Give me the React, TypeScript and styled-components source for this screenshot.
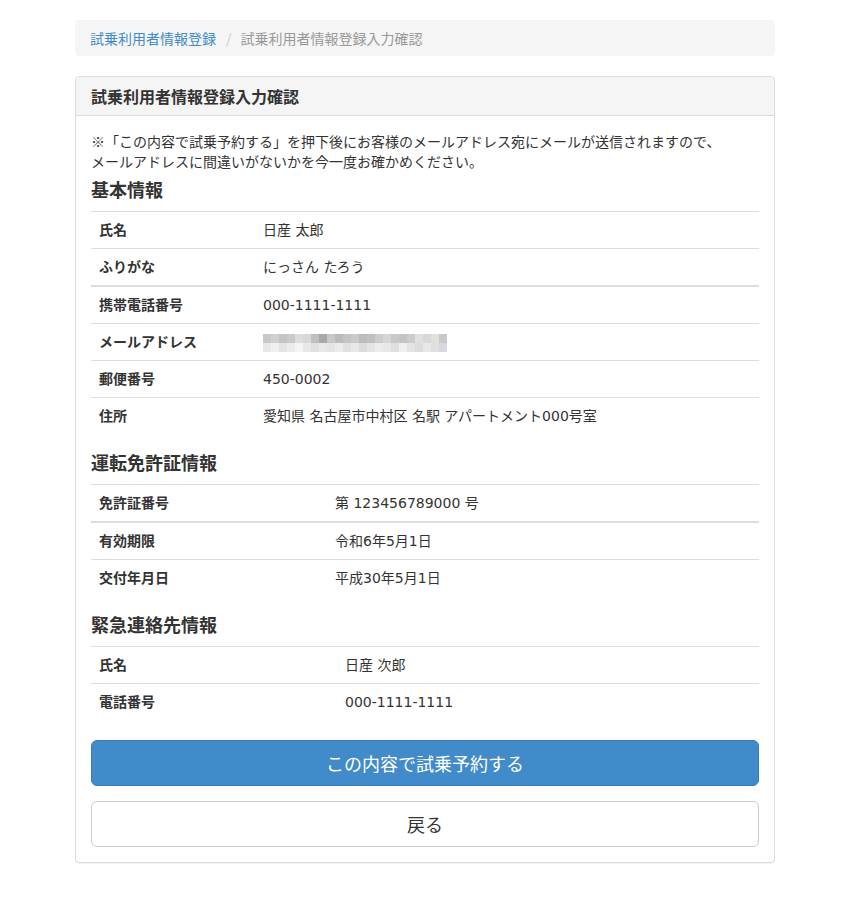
import React from "react";
import styled, { createGlobalStyle } from "styled-components";

const Global = createGlobalStyle`
  html, body { margin: 0; padding: 0; background: #fff; }
  body {
    font-family: "DejaVu Sans", "Noto Sans CJK JP", sans-serif;
    font-size: 14px;
    line-height: 20px;
    color: #333;
  }
  * { box-sizing: border-box; }
`;

const Container = styled.div`
  width: 700px;
  margin: 20px auto 0;
`;

const Breadcrumb = styled.ol`
  list-style: none;
  margin: 0 0 20px;
  padding: 8px 15px;
  background: #f5f5f5;
  border-radius: 4px;
  display: flex;
  font-family: "Noto Sans CJK JP", sans-serif;
`;

const Crumb = styled.li<{ $active?: boolean }>`
  color: ${(p) => (p.$active ? "#999" : "#428bca")};
  &:not(:first-child)::before {
    content: "/";
    color: #ccc;
    padding: 0 9px 0 10px;
  }
`;

const Panel = styled.section`
  border: 1px solid #ddd;
  border-radius: 4px;
  background: #fff;
  box-shadow: 0 1px 1px rgba(0, 0, 0, 0.05);
  margin-bottom: 40px;
`;

const PanelHeading = styled.div`
  background: #f5f5f5;
  border-bottom: 1px solid #ddd;
  border-radius: 3px 3px 0 0;
  padding: 10px 15px;
`;

const PanelTitle = styled.h3`
  margin: 0;
  font-family: "Noto Sans CJK JP", sans-serif;
  font-size: 16px;
  font-weight: 700;
  line-height: 18px;
  color: #333;
`;

const PanelBody = styled.div`
  padding: 15px;
`;

const Note = styled.p`
  margin: 0 0 10px;
  font-family: "Noto Sans CJK JP", sans-serif;
  font-size: 14px;
  line-height: 20px;
`;

const SectionTitle = styled.h4`
  margin: 10px 0 14px;
  font-family: "Noto Sans CJK JP", sans-serif;
  font-size: 18px;
  font-weight: 700;
  line-height: 16px;
  color: #333;
`;

const Table = styled.table`
  width: 100%;
  border-collapse: collapse;
  border-spacing: 0;
  margin-bottom: 20px;
  & > tbody + tbody {
    border-top: 2px solid #ddd;
  }
`;

const Label = styled.th<{ $w: number }>`
  width: ${(p) => p.$w}px;
  text-align: left;
  font-weight: 700;
  padding: 8px;
  line-height: 20px;
  border-top: 1px solid #ddd;
  vertical-align: top;
  font-family: "DejaVu Sans", "Noto Sans CJK JP", sans-serif;
  font-size: 14px;
`;

const Value = styled.td`
  padding: 8px;
  line-height: 20px;
  border-top: 1px solid #ddd;
  vertical-align: top;
`;

const Mosaic = styled.div`
  display: grid;
  grid-template-columns: repeat(23, 8px);
  grid-template-rows: 9px 9px;
  margin-top: 2px;
`;

const Tile = styled.span`
  display: block;
`;

const PrimaryButton = styled.button`
  display: block;
  width: 100%;
  padding: 10px 16px;
  font-family: "Noto Sans CJK JP", sans-serif;
  font-size: 18px;
  line-height: 24px;
  color: #fff;
  background: #428bca;
  border: 1px solid #357ebd;
  border-radius: 6px;
  cursor: pointer;
  margin: 0 0 15px;
`;

const DefaultButton = styled(PrimaryButton)`
  color: #333;
  background: #fff;
  border-color: #ccc;
  margin: 0;
`;

const row1 = [
  "#c8c8c8", "#d0d0d0", "#c4c4c4", "#cacaca", "#dcdcdc", "#d8d8d8", "#c0c0c0", "#a8a8a8",
  "#c8c8c8", "#bcbcbc", "#c4c4c4", "#cacaca", "#bcbcbc", "#c0c0c0", "#cccccc", "#d4d6d8",
  "#c8c8c8", "#c4c4c4", "#cccccc", "#e0e0e0", "#d8d8d8", "#e0e0dc", "#c8c8cc",
];
const row2 = [
  "#e8e8e8", "#f0f0f0", "#e4e4e4", "#ecece8", "#f4f4f4", "#e8e8e8", "#e0e0e0", "#e8e8e8",
  "#e4e4e4", "#ececec", "#e0e0e0", "#e8e8e8", "#dcdcdc", "#e4e4e4", "#ececec", "#e8e8e8",
  "#e0e0e0", "#f0f0f0", "#e4e4e4", "#dcdcdc", "#e8e8e8", "#e0e0e0", "#d8d8e0",
];

type Row = [string, React.ReactNode];

const InfoTable: React.FC<{ groups: Row[][]; labelWidth: number }> = ({ groups, labelWidth }) => (
  <Table>
    {groups.map((g, gi) => (
      <tbody key={gi}>
        {g.map(([k, v]) => (
          <tr key={k}>
            <Label $w={labelWidth}>{k}</Label>
            <Value>{v}</Value>
          </tr>
        ))}
      </tbody>
    ))}
  </Table>
);

export default function App() {
  const mosaic = (
    <Mosaic>
      {[...row1, ...row2].map((c, i) => (
        <Tile key={i} style={{ background: c }} />
      ))}
    </Mosaic>
  );
  return (
    <>
      <Global />
      <Container>
        <Breadcrumb>
          <Crumb>試乗利用者情報登録</Crumb>
          <Crumb $active>試乗利用者情報登録入力確認</Crumb>
        </Breadcrumb>
        <Panel>
          <PanelHeading>
            <PanelTitle>試乗利用者情報登録入力確認</PanelTitle>
          </PanelHeading>
          <PanelBody>
            <Note>
              ※「この内容で試乗予約する」を押下後にお客様のメールアドレス宛にメールが送信されますので、
              <br />
              メールアドレスに間違いがないかを今一度お確かめください。
            </Note>
            <SectionTitle>基本情報</SectionTitle>
            <InfoTable
              labelWidth={164}
              groups={[
                [
                  ["氏名", "日産 太郎"],
                  ["ふりがな", "にっさん たろう"],
                ],
                [
                  ["携帯電話番号", "000-1111-1111"],
                  ["メールアドレス", mosaic],
                  ["郵便番号", "450-0002"],
                  ["住所", "愛知県 名古屋市中村区 名駅 アパートメント000号室"],
                ],
              ]}
            />
            <SectionTitle>運転免許証情報</SectionTitle>
            <InfoTable
              labelWidth={236}
              groups={[
                [["免許証番号", "第 123456789000 号"]],
                [
                  ["有効期限", "令和6年5月1日"],
                  ["交付年月日", "平成30年5月1日"],
                ],
              ]}
            />
            <SectionTitle>緊急連絡先情報</SectionTitle>
            <InfoTable
              labelWidth={246}
              groups={[
                [
                  ["氏名", "日産 次郎"],
                  ["電話番号", "000-1111-1111"],
                ],
              ]}
            />
            <PrimaryButton type="button">この内容で試乗予約する</PrimaryButton>
            <DefaultButton type="button">戻る</DefaultButton>
          </PanelBody>
        </Panel>
      </Container>
    </>
  );
}
